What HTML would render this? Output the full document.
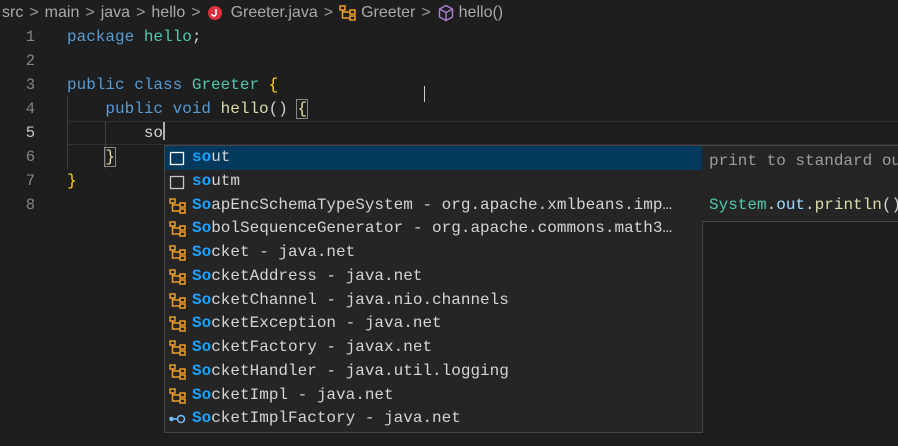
<!DOCTYPE html>
<html><head><meta charset="utf-8"><style>
*{margin:0;padding:0;box-sizing:border-box}
body{width:898px;height:446px;background:#1e1e1e;overflow:hidden;position:relative;font-family:"Liberation Mono",monospace;}
.bc{position:absolute;top:2px;left:2px;font-family:"Liberation Sans",sans-serif;font-size:16px;color:#a9a9a9;white-space:nowrap;height:22px;line-height:20px;display:flex;align-items:center;gap:0}
.bc .s{margin:0 6px;color:#9a9a9a}
.ln{position:absolute;left:0;width:35px;text-align:right;font-size:15.5px;color:#858585;line-height:24px}
.code{position:absolute;left:67px;font-size:16px;line-height:24px;color:#d4d4d4;white-space:pre}
.k{color:#569cd6}.t{color:#4ec9b0}.f{color:#dcdcaa}.p{color:#d4d4d4}
.guide{position:absolute;width:1px;background:#404040}
.sug{position:absolute;left:164px;top:145px;width:539px;height:288px;background:#252526;border:1px solid #454545}
.row{height:23.75px;line-height:23.75px;position:relative;padding-left:27px;font-size:16px;color:#d4d4d4;white-space:nowrap}
.row.sel{background:#04395e}
.row b{color:#18a3ff;font-weight:bold}
.row svg{position:absolute;left:4px;top:4px}
.det{position:absolute;left:702px;top:145px;width:200px;height:77px;background:#252526;border:1px solid #454545;border-left:none;font-size:16px;white-space:nowrap}
</style></head><body>
<div class="bc">src<span class="s">&gt;</span>main<span class="s">&gt;</span>java<span class="s">&gt;</span>hello<span class="s">&gt;</span>
<svg width="16" height="16" viewBox="0 0 16 16" style="margin-right:8px"><circle cx="8" cy="8" r="7" fill="#e0303f"/><path d="M9 4v5a2 2 0 0 1-4 0" stroke="#fff" stroke-width="1.6" fill="none"/></svg>Greeter.java<span class="s">&gt;</span>
<svg width="18" height="16" viewBox="0 0 18 16" style="margin-right:4px"><g fill="none" stroke="#ee9d28" stroke-width="1.5"><rect x="1" y="1" width="5" height="4"/><rect x="11" y="5" width="5" height="4"/><rect x="11" y="11" width="5" height="4"/><path d="M3.5 5v8h7.5M3.5 7h7.5"/></g></svg>Greeter<span class="s">&gt;</span>
<svg width="18" height="18" viewBox="0 0 18 18" style="margin-right:4px"><g fill="none" stroke="#b180d7" stroke-width="1.4"><path d="M9 1.5l6.5 3.5v8L9 16.5 2.5 13V5z"/><path d="M2.5 5L9 8.5 15.5 5M9 8.5v8"/></g></svg>hello()</div>

<div class="ln" style="top:25px">1</div><div class="ln" style="top:49px">2</div><div class="ln" style="top:73px">3</div><div class="ln" style="top:97px">4</div><div class="ln" style="top:121px;color:#c6c6c6">5</div><div class="ln" style="top:145px">6</div><div class="ln" style="top:169px">7</div><div class="ln" style="top:193px">8</div>

<div style="position:absolute;left:67px;top:121px;width:831px;height:24px;border-bottom:1px solid #303030;border-top:1px solid #303030"></div>
<div class="guide" style="left:67px;top:97px;height:72px"></div>
<div class="guide" style="left:105px;top:121px;height:48px"></div>

<div class="code" style="top:25px"><span class="k">package</span> <span class="t">hello</span>;</div>
<div class="code" style="top:73px"><span class="k">public</span> <span class="k">class</span> <span class="t">Greeter</span> <span style="color:#ffd700">{</span></div>
<div class="code" style="top:97px">    <span class="k">public</span> <span class="k">void</span> <span class="f">hello</span>() <span style="outline:1px solid #888;color:#e8e0a0">{</span></div>
<div class="code" style="top:121px">        so<span style="display:inline-block;width:2px;height:18px;background:#aeafad;vertical-align:-3px"></span></div>
<div class="code" style="top:145px">    <span style="outline:1px solid #888;color:#e8e0a0">}</span></div>
<div class="code" style="top:169px"><span style="color:#ffd700">}</span></div>
<div style="position:absolute;top:86px;width:6px;height:16px;border-left:1px solid #ccc;left:424px"></div>

<div class="sug">
<div class="row sel"><svg width="16" height="16"><rect x="1.5" y="2.5" width="13" height="12" fill="none" stroke="#fff" stroke-width="1.3"/></svg><b>so</b>ut</div>
<div class="row"><svg width="16" height="16"><rect x="1.5" y="2.5" width="13" height="12" fill="none" stroke="#c5c5c5" stroke-width="1.3"/></svg><b>so</b>utm</div>
<div class="row"><svg width="18" height="16"><g fill="none" stroke="#ee9d28" stroke-width="1.5"><rect x="1" y="1" width="5" height="4"/><rect x="11" y="5" width="5" height="4"/><rect x="11" y="11" width="5" height="4"/><path d="M3.5 5v8h7.5M3.5 7h7.5"/></g></svg><b>So</b>apEncSchemaTypeSystem - org.apache.xmlbeans.imp…</div>
<div class="row"><svg width="18" height="16"><g fill="none" stroke="#ee9d28" stroke-width="1.5"><rect x="1" y="1" width="5" height="4"/><rect x="11" y="5" width="5" height="4"/><rect x="11" y="11" width="5" height="4"/><path d="M3.5 5v8h7.5M3.5 7h7.5"/></g></svg><b>So</b>bolSequenceGenerator - org.apache.commons.math3…</div>
<div class="row"><svg width="18" height="16"><g fill="none" stroke="#ee9d28" stroke-width="1.5"><rect x="1" y="1" width="5" height="4"/><rect x="11" y="5" width="5" height="4"/><rect x="11" y="11" width="5" height="4"/><path d="M3.5 5v8h7.5M3.5 7h7.5"/></g></svg><b>So</b>cket - java.net</div>
<div class="row"><svg width="18" height="16"><g fill="none" stroke="#ee9d28" stroke-width="1.5"><rect x="1" y="1" width="5" height="4"/><rect x="11" y="5" width="5" height="4"/><rect x="11" y="11" width="5" height="4"/><path d="M3.5 5v8h7.5M3.5 7h7.5"/></g></svg><b>So</b>cketAddress - java.net</div>
<div class="row"><svg width="18" height="16"><g fill="none" stroke="#ee9d28" stroke-width="1.5"><rect x="1" y="1" width="5" height="4"/><rect x="11" y="5" width="5" height="4"/><rect x="11" y="11" width="5" height="4"/><path d="M3.5 5v8h7.5M3.5 7h7.5"/></g></svg><b>So</b>cketChannel - java.nio.channels</div>
<div class="row"><svg width="18" height="16"><g fill="none" stroke="#ee9d28" stroke-width="1.5"><rect x="1" y="1" width="5" height="4"/><rect x="11" y="5" width="5" height="4"/><rect x="11" y="11" width="5" height="4"/><path d="M3.5 5v8h7.5M3.5 7h7.5"/></g></svg><b>So</b>cketException - java.net</div>
<div class="row"><svg width="18" height="16"><g fill="none" stroke="#ee9d28" stroke-width="1.5"><rect x="1" y="1" width="5" height="4"/><rect x="11" y="5" width="5" height="4"/><rect x="11" y="11" width="5" height="4"/><path d="M3.5 5v8h7.5M3.5 7h7.5"/></g></svg><b>So</b>cketFactory - javax.net</div>
<div class="row"><svg width="18" height="16"><g fill="none" stroke="#ee9d28" stroke-width="1.5"><rect x="1" y="1" width="5" height="4"/><rect x="11" y="5" width="5" height="4"/><rect x="11" y="11" width="5" height="4"/><path d="M3.5 5v8h7.5M3.5 7h7.5"/></g></svg><b>So</b>cketHandler - java.util.logging</div>
<div class="row"><svg width="18" height="16"><g fill="none" stroke="#ee9d28" stroke-width="1.5"><rect x="1" y="1" width="5" height="4"/><rect x="11" y="5" width="5" height="4"/><rect x="11" y="11" width="5" height="4"/><path d="M3.5 5v8h7.5M3.5 7h7.5"/></g></svg><b>So</b>cketImpl - java.net</div>
<div class="row"><svg width="18" height="16"><g fill="none" stroke="#75beff" stroke-width="1.5"><circle cx="2.5" cy="8" r="1.5" fill="#75beff"/><path d="M4 8h4"/><circle cx="12" cy="8" r="3.5"/></g></svg><b>So</b>cketImplFactory - java.net</div>
</div>

<div class="det">
<div style="position:absolute;left:7px;top:6px;color:#9d9d9d">print to standard out</div>
<div style="position:absolute;left:7px;top:50px"><span style="color:#4ec9b0">System</span><span style="color:#d4d4d4">.</span><span style="color:#9cdcfe">out</span><span style="color:#d4d4d4">.</span><span style="color:#dcdcaa">println</span><span style="color:#d4d4d4">();</span></div>
</div>
</body></html>
